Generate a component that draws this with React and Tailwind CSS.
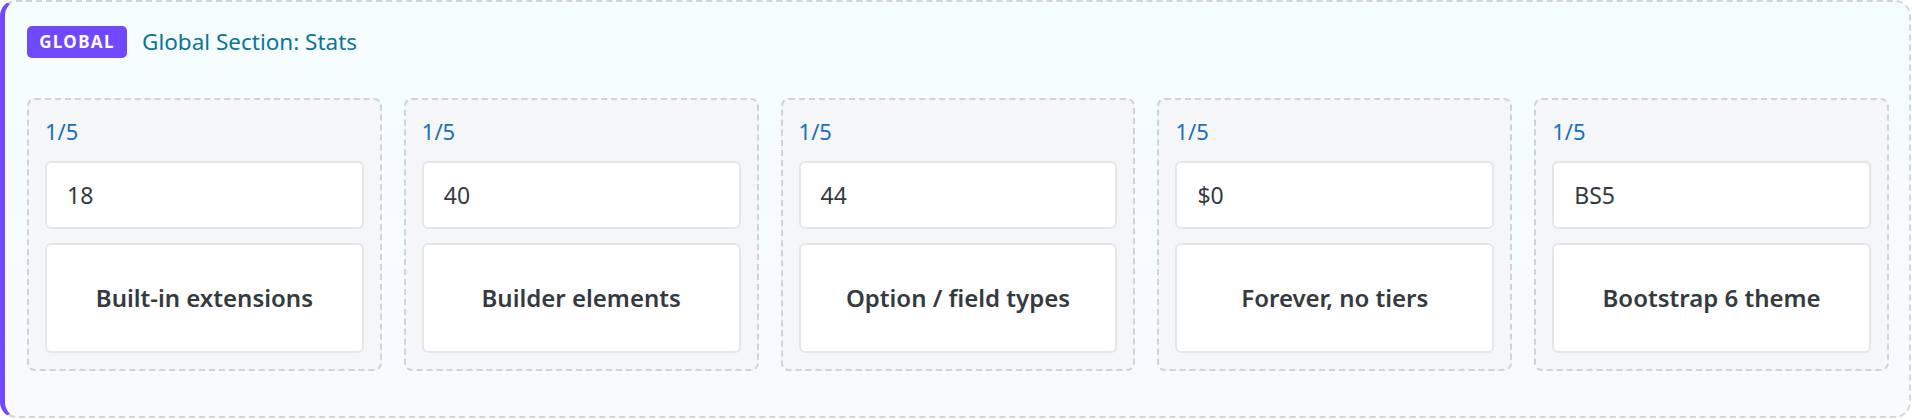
const stats = [
  { value: '18', label: 'Built-in extensions' },
  { value: '40', label: 'Builder elements' },
  { value: '44', label: 'Option / field types' },
  { value: '$0', label: 'Forever, no tiers' },
  { value: 'BS5', label: 'Bootstrap 6 theme' },
];

function StatCard({ value, label }) {
  return (
    <div className="rounded-lg border-2 border-dashed border-[#cfd2d8] bg-[#f5f6f8] px-4 pb-4 pt-4">
      <div className="mb-[15px] text-[22px] leading-[30px] text-[#1b6fb9]">1/5</div>
      <div className="flex h-[68px] items-center rounded-md border-2 border-[#e4e6ea] bg-white px-5 text-[23px] text-[#343a40]">
        {value}
      </div>
      <div className="mt-[14px] flex h-[110px] items-center justify-center rounded-md border-2 border-[#e4e6ea] bg-white text-[24px] font-semibold text-[#343a40]">
        {label}
      </div>
    </div>
  );
}

export default function App() {
  return (
    <div className="h-[420px] w-[1912px] font-['Noto_Sans',sans-serif]">
      <section className="w-[1911px] rounded-2xl border-2 border-l-[5px] border-dashed border-[#d2d5db] border-l-[#7049ff] bg-gradient-to-b from-[#f4fdff] to-[#f8fafc] pb-[45px] pl-[22px] pr-[20px] pt-[24px] [border-left-style:solid]">
        <div className="flex h-[32px] items-center gap-[15px]">
          <span className="flex h-[32px] w-[100px] items-center justify-center rounded-[5px] bg-[#7049ff] text-[17px] font-bold tracking-[0.08em] text-white">
            GLOBAL
          </span>
          <span className="text-[22.5px] leading-[32px] text-[#0b7596]">Global Section: Stats</span>
        </div>
        <div className="mt-[40px] grid grid-cols-5 gap-[22px]">
          {stats.map((s) => (
            <StatCard key={s.value} value={s.value} label={s.label} />
          ))}
        </div>
      </section>
    </div>
  );
}
